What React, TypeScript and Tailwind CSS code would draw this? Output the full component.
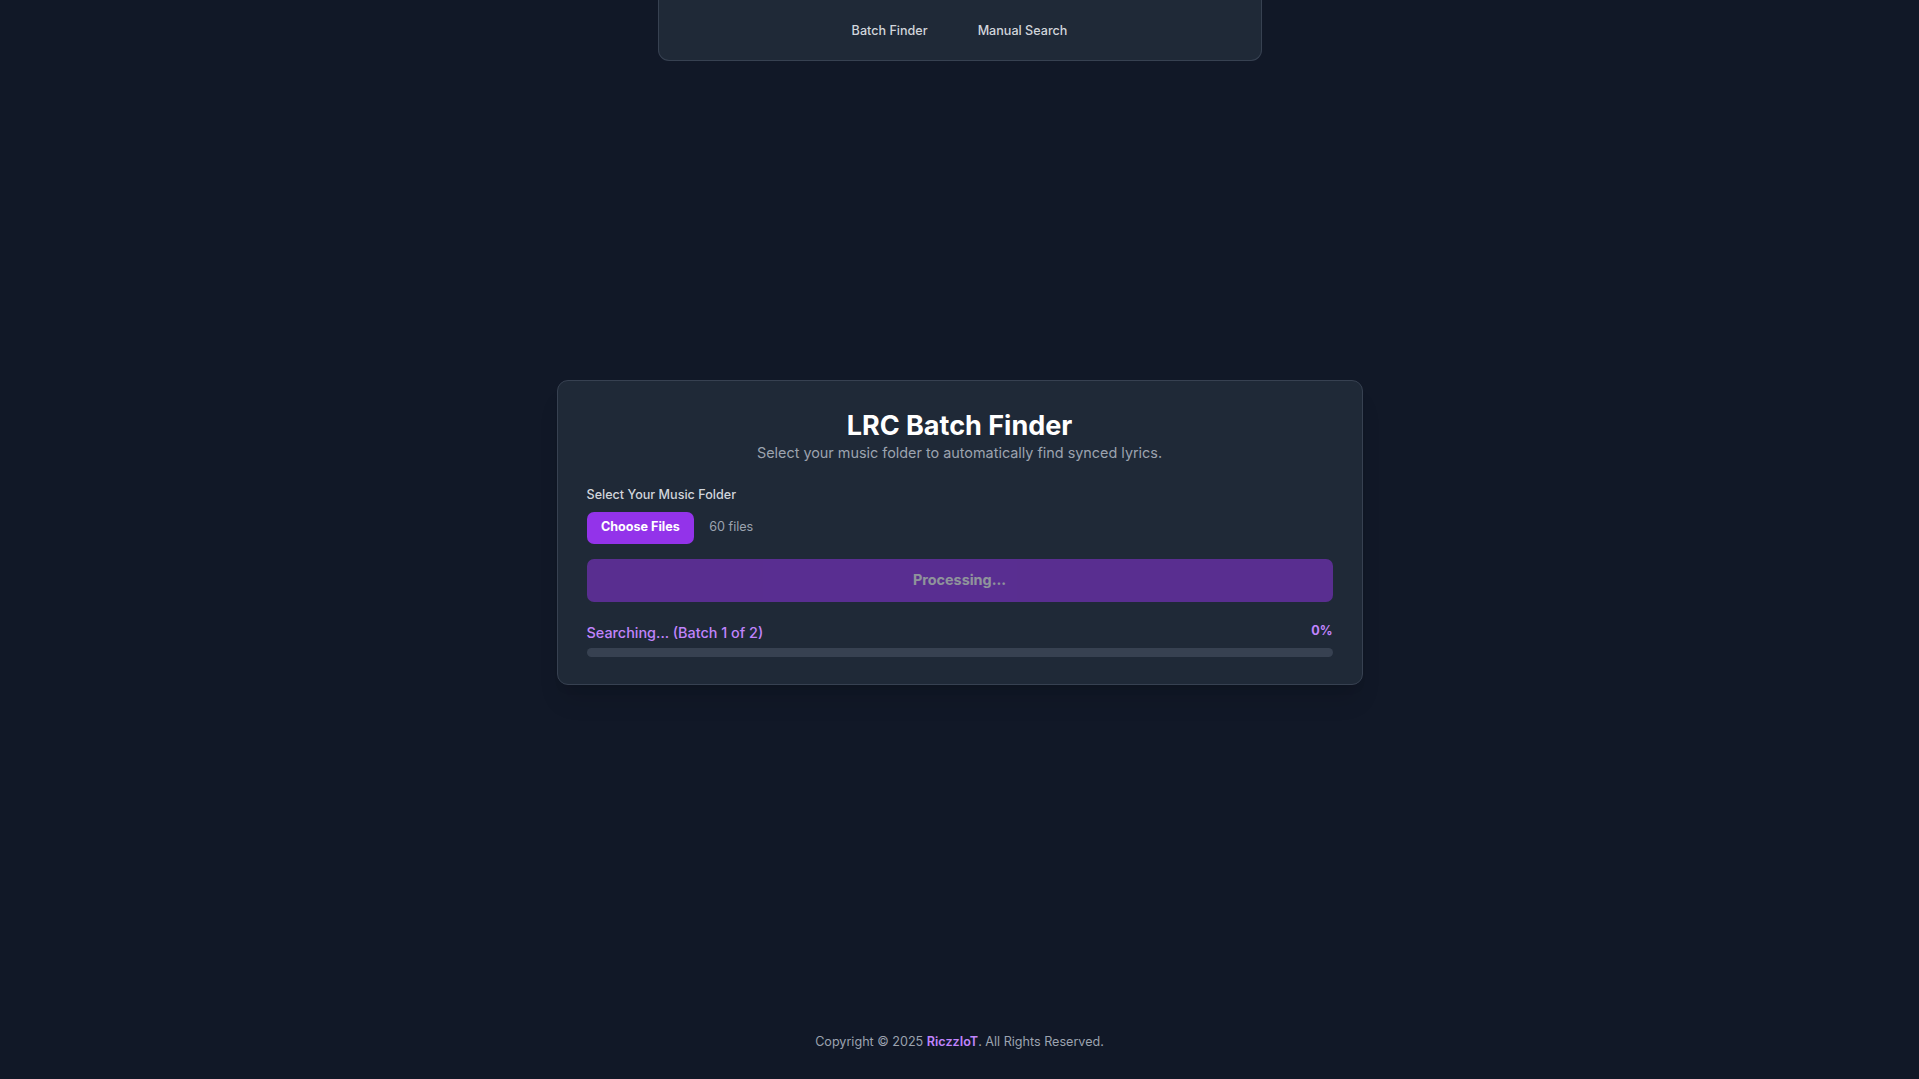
import React from 'react';

const navLinks = ['Batch Finder', 'Manual Search'];

export default function App() {
  return (
    <div
      className="min-h-screen flex flex-col bg-[#111827] text-white"
      style={{ fontFamily: 'Inter, "Noto Sans", sans-serif' }}
    >
      {/* Top nav */}
      <nav className="mx-auto w-[604px] h-[61px] pt-[2px] flex items-center justify-center gap-[50px] bg-[#1f2937] border border-t-0 border-[#374151] rounded-b-[11px]">
        {navLinks.map((link) => (
          <a key={link} className="text-[12.6px] leading-[18px] font-medium text-[#d1d5db] cursor-pointer">
            {link}
          </a>
        ))}
      </nav>

      {/* Main */}
      <main className="flex-1 flex items-center justify-center">
        <div className="w-[806px] bg-[#1f2937] border border-[#374151] rounded-[11px] shadow-xl px-[29px] pt-[29px] pb-[27px]">
          <div className="text-center">
            <h1 className="text-[27px] leading-[32.4px] font-bold text-white">LRC Batch Finder</h1>
            <p className="text-[14.4px] leading-[21.6px] text-[#9ca3af]">
              Select your music folder to automatically find synced lyrics.
            </p>
          </div>

          <div className="mt-[22px]">
            <label className="block text-[12.6px] leading-[18px] font-medium text-[#d1d5db]">
              Select Your Music Folder
            </label>
            <div className="mt-[8px] flex items-center gap-[15px]">
              <button className="h-[32px] px-[14.4px] rounded-[7px] bg-[#9333ea] text-[12.6px] font-bold text-white">
                Choose Files
              </button>
              <span className="text-[12.6px] text-[#9ca3af]">60 files</span>
            </div>
          </div>

          <button
            disabled
            className="mt-[15px] w-full h-[43px] rounded-[7px] bg-[#9333ea] opacity-50 text-[14.4px] font-bold text-white"
          >
            Processing...
          </button>

          <div className="mt-[20px]">
            <div className="flex items-center justify-between">
              <span className="text-[14.4px] leading-[21.6px] font-medium text-[#c084fc]">
                Searching... (Batch 1 of 2)
              </span>
              <span className="text-[12.6px] leading-[18px] font-bold text-[#c084fc] -mt-1">0%</span>
            </div>
            <div className="mt-[5px] h-[9px] w-full rounded-full bg-[#374151]" />
          </div>
        </div>
      </main>

      {/* Footer */}
      <footer className="pt-[29px] pb-[28px] text-center text-[12.6px] leading-[18px] text-[#9ca3af]">
        Copyright © 2025 <span className="font-semibold text-[#c084fc]">RiczzIoT</span>. All Rights Reserved.
      </footer>
    </div>
  );
}
